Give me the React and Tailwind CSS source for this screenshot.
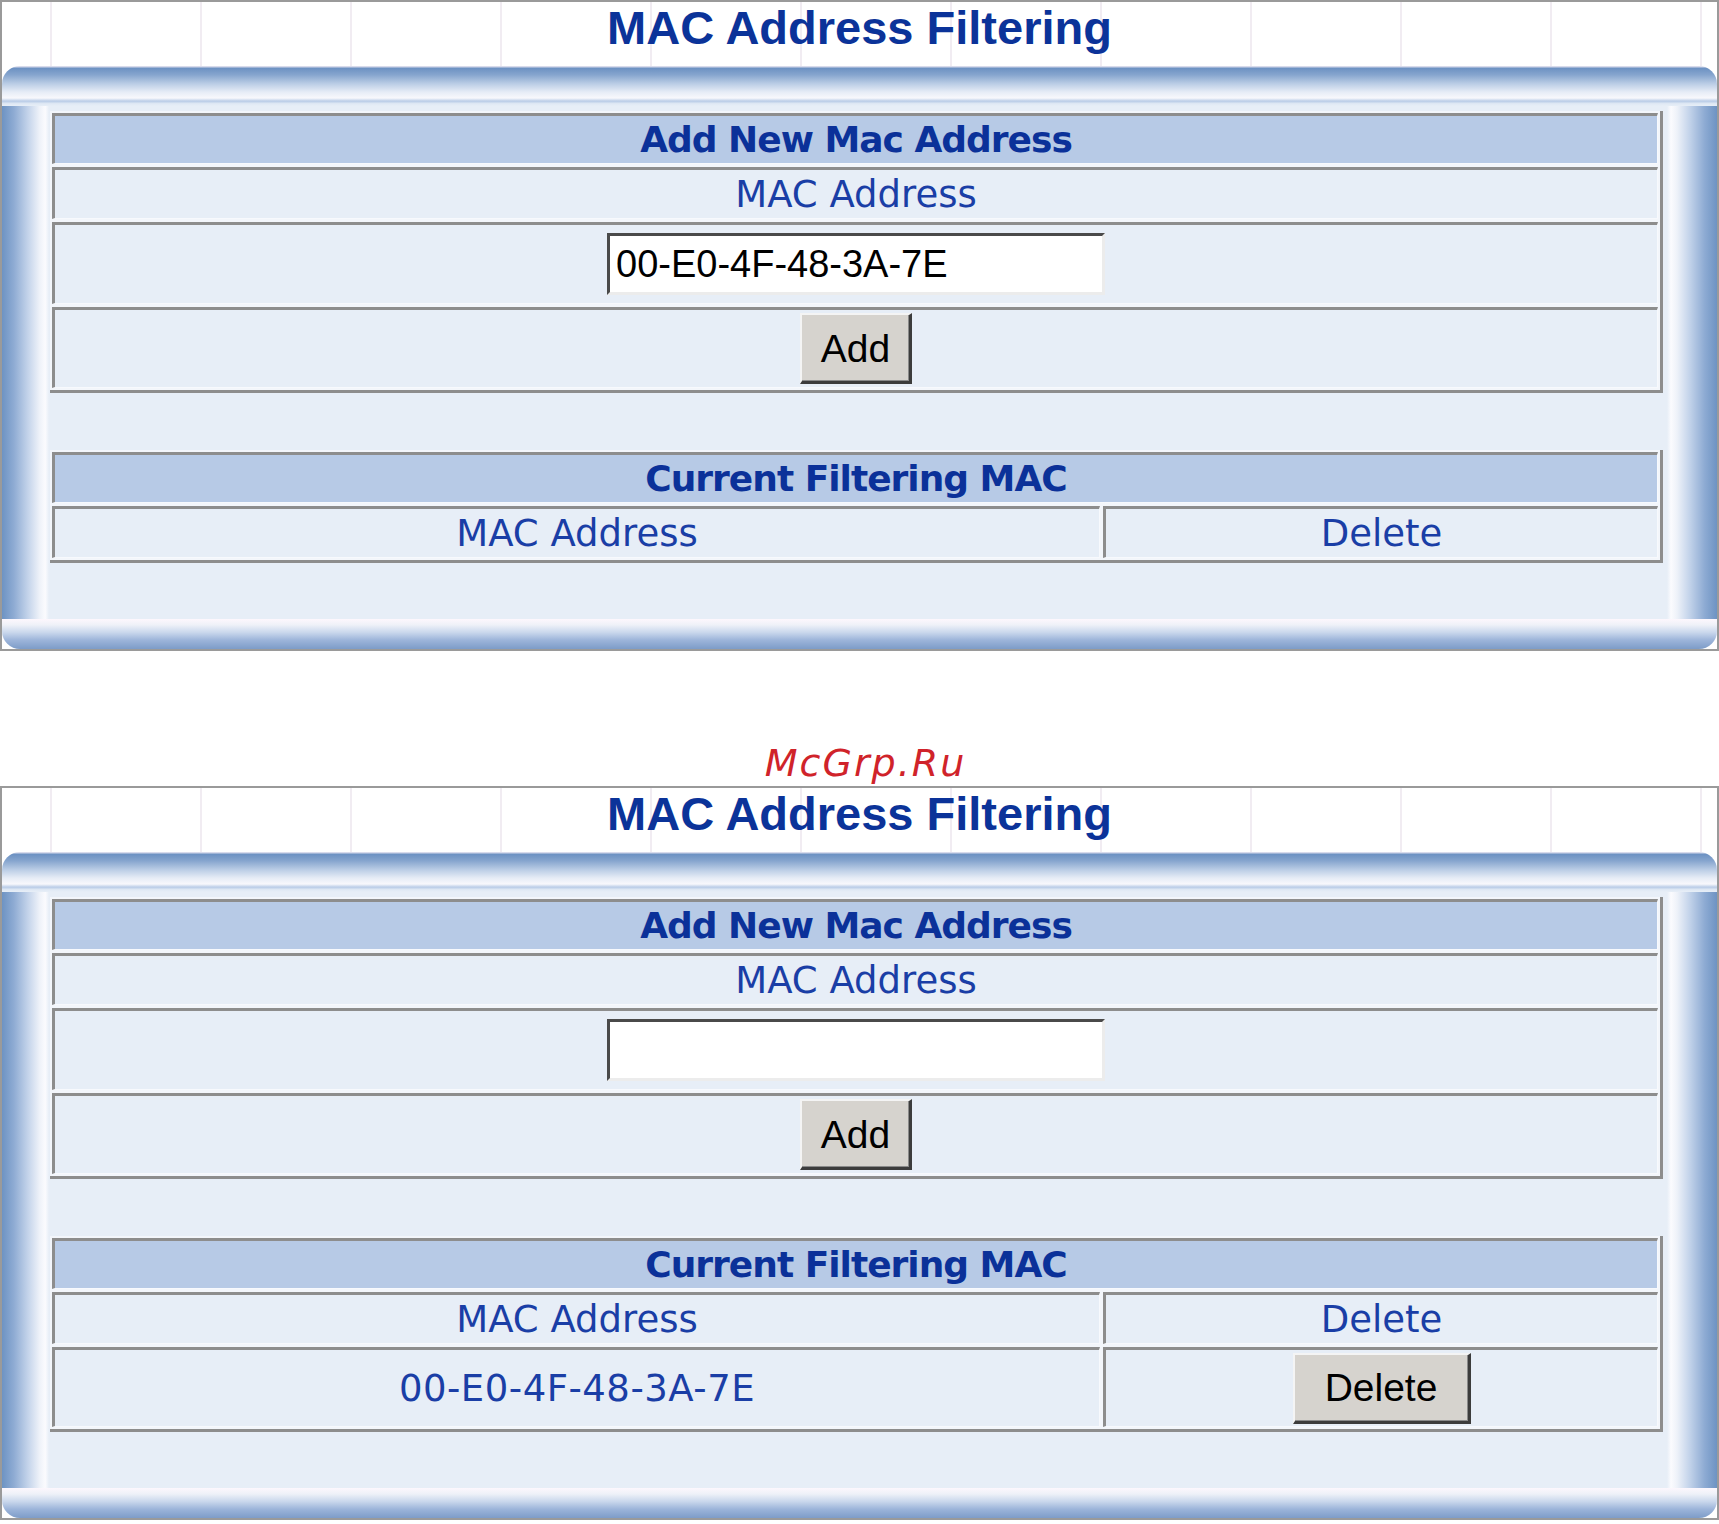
import clsx from "clsx";

const sans = "font-['DejaVu_Sans',Verdana,sans-serif]";
const arial = "font-['Liberation_Sans',Arial,sans-serif]";

// faint vertical guide lines behind the title
const titleGrid =
    "bg-[image:repeating-linear-gradient(to_right,transparent_0_48px,#f1ecf2_48px_50px,transparent_50px_150px)]";

function Cell({ head, className, children }) {
    return (
        <div
            className={clsx(
                "flex items-center justify-center border-t-[3px] border-l-[3px] border-[#8d8d8d] border-r border-b border-r-[#f7f9fd] border-b-[#f7f9fd]",
                head ? "bg-[#b7cae6]" : "bg-[#e7eef7]",
                className
            )}
        >
            {children}
        </div>
    );
}

function Table({ children, className }) {
    return (
        <div
            className={clsx(
                "flex flex-col gap-[3px] p-[2px] bg-[#f3f6fb] border-r-[3px] border-b-[3px] border-[#8d8d8d]",
                className
            )}
        >
            {children}
        </div>
    );
}

function HeadText({ children }) {
    return (
        <span className={`${sans} text-[36px] font-bold tracking-[-1px] text-[#0b3199] leading-none`}>
            {children}
        </span>
    );
}

function CellText({ children, className }) {
    return (
        <span className={clsx(sans, "text-[37px] text-[#1a3ea6] leading-none", className)}>
            {children}
        </span>
    );
}

function Button({ children, className }) {
    return (
        <button
            type="button"
            className={clsx(
                arial,
                "h-[71px] bg-[#d6d3ce] text-black text-[39px] leading-none border-t-2 border-l-2 border-r-[3px] border-b-[3px] border-t-[#f4f4f4] border-l-[#f4f4f4] border-r-[#3c3c3c] border-b-[#3c3c3c] shadow-[inset_-1px_-1px_0_#8a8a8a]",
                className
            )}
        >
            {children}
        </button>
    );
}

function Panel({ mac, entries }) {
    return (
        <div className="border-2 border-[#9a9a9a] bg-white">
            <div className={`h-[64px] flex justify-center ${titleGrid}`}>
                <h1 className={`${arial} pt-[2px] text-[47px] leading-[47px] font-bold text-[#0b3399]`}>
                    MAC Address Filtering
                </h1>
            </div>

            <div className="h-[40px] rounded-t-[18px] bg-[image:linear-gradient(to_bottom,#f4eef6_0%,#6d92c3_6%,#86a5ce_22%,#bccee6_45%,#e6ecf6_65%,#f8f8fc_80%,#b9cce7_88%,#dfe8f4_94%,#e7eef7_100%)]" />

            <div className="flex">
                <div className="w-[47px] shrink-0 bg-[image:linear-gradient(to_right,#6d93c3_0%,#8eabd3_25%,#c3d3ea_55%,#eef2f9_80%,#fbfbfe_92%,#e7eef7_100%)]" />

                <div className="flex-1 bg-[#e7eef7] pl-[1px] pr-[4px] pt-[5px] pb-[56px]">
                    <Table>
                        <Cell head className="h-[51px]">
                            <HeadText>Add New Mac Address</HeadText>
                        </Cell>
                        <Cell className="h-[52px]">
                            <CellText>MAC Address</CellText>
                        </Cell>
                        <Cell className="h-[82px]">
                            <input
                                type="text"
                                defaultValue={mac}
                                className={`${arial} w-[498px] h-[62px] bg-white text-black text-[38px] pl-[6px] outline-none border-[3px] border-t-[#4a4a4a] border-l-[#4a4a4a] border-r-[#ececec] border-b-[#ececec]`}
                            />
                        </Cell>
                        <Cell className="h-[81px]">
                            <Button className="w-[112px]">Add</Button>
                        </Cell>
                    </Table>

                    <Table className="mt-[57px]">
                        <Cell head className="h-[51px]">
                            <HeadText>Current Filtering MAC</HeadText>
                        </Cell>
                        <div className="flex gap-[3px]">
                            <Cell className="h-[52px] w-[1048px]">
                                <CellText>MAC Address</CellText>
                            </Cell>
                            <Cell className="h-[52px] flex-1">
                                <CellText>Delete</CellText>
                            </Cell>
                        </div>
                        {entries.map((entry) => (
                            <div key={entry} className="flex gap-[3px]">
                                <Cell className="h-[80px] w-[1048px]">
                                    <CellText className="tracking-[0.5px]">{entry}</CellText>
                                </Cell>
                                <Cell className="h-[80px] flex-1">
                                    <Button className="w-[178px] h-[70px]">Delete</Button>
                                </Cell>
                            </div>
                        ))}
                    </Table>
                </div>

                <div className="w-[50px] shrink-0 bg-[image:linear-gradient(to_left,#6d93c3_0%,#8eabd3_25%,#c3d3ea_55%,#eef2f9_80%,#fbfbfe_92%,#e7eef7_100%)]" />
            </div>

            <div className="h-[30px] rounded-b-[18px] bg-[image:linear-gradient(to_bottom,#fdf7fd_0%,#eef1f8_20%,#c9d7ec_45%,#9db5da_70%,#7d9cc8_100%)]" />
        </div>
    );
}

export default function App() {
    return (
        <div className="w-[1719px] min-h-[1524px] bg-white">
            <Panel mac="00-E0-4F-48-3A-7E" entries={[]} />

            <div className="h-[135px] flex justify-center pt-[92px] pl-[12px]">
                <span className="font-['DejaVu_Sans',sans-serif] italic text-[38px] leading-[40px] tracking-[2px] text-[#d0232a]">
                    McGrp.Ru
                </span>
            </div>

            <Panel mac="" entries={["00-E0-4F-48-3A-7E"]} />
        </div>
    );
}
